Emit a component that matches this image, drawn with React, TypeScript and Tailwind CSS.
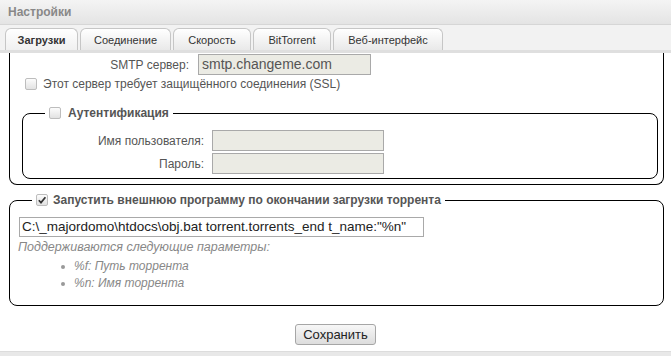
import React from "react";

const tabs = [
  { name: "Загрузки", w: "w-[73px]", active: true },
  { name: "Соединение", w: "w-[91px]" },
  { name: "Скорость", w: "w-[78px]" },
  { name: "BitTorrent", w: "w-[78px]" },
  { name: "Веб-интерфейс", w: "w-[110px]" },
];

function Check({ checked }: { checked?: boolean }) {
  return (
    <span className="flex h-[12px] w-[12px] shrink-0 items-center justify-center rounded-[2px] border border-[#bdbdbd] bg-gradient-to-b from-[#fcfcfc] to-[#e2e2e2]">
      {checked && (
        <svg width="10" height="10" viewBox="0 0 10 10">
          <path d="M1.8 5.2 L4 7.6 L8.4 2.2" fill="none" stroke="#333" strokeWidth="1.7" />
        </svg>
      )}
    </span>
  );
}

export default function App() {
  return (
    <div className="flex h-[356px] w-[671px] flex-col overflow-hidden bg-white font-['Liberation_Sans',Arial,sans-serif] text-[12px] text-[#555]">
      {/* title */}
      <div className="flex h-[25px] shrink-0 items-center border-b border-[#d6d6d6] bg-gradient-to-b from-[#f4f4f4] to-[#e4e4e4] px-[8px] font-bold text-[#888]">
        Настройки
      </div>

      {/* tabs */}
      <div className="flex h-[28px] shrink-0 items-end gap-[2px] border-b-[3px] border-[#dfdfdf] bg-[#f2f2f2] pl-[5px]">
        {tabs.map((t) => (
          <div
            key={t.name}
            className={`flex h-[22px] ${t.w} items-center justify-center rounded-t-[6px] border border-b-0 border-[#c6c6c6] bg-gradient-to-b pt-[2px] text-[11px] text-[#333] ${
              t.active ? "from-white to-[#f0f0f0] font-bold" : "from-white to-[#e9e9e9]"
            }`}
          >
            {t.name}
          </div>
        ))}
      </div>

      {/* content */}
      <div className="flex flex-1 flex-col">
        {/* SMTP block (top scrolled away) */}
        <div className="ml-[9px] w-[655px] rounded-b-[8px] border border-t-0 border-black pb-[5px]">
          <div className="mt-[1px] flex items-center gap-[9px]">
            <span className="w-[179px] text-right">SMTP сервер:</span>
            <input
              disabled
              value="smtp.changeme.com"
              className="h-[21px] w-[173px] border border-[#a9a9a9] bg-[#ebebe4] px-[3px] text-[14px] text-[#555]"
            />
          </div>
          <div className="mt-[2px] flex h-[14px] items-center gap-[6px] pl-[15px]">
            <Check />
            <span>Этот сервер требует защищённого соединения (SSL)</span>
          </div>

          <fieldset className="ml-[12px] mt-[15px] w-[636px] rounded-[8px] border border-black pb-[4px]">
            <legend className="ml-[22px] flex items-center gap-[7px] px-[4px] font-bold leading-[14px]">
              <Check />
              <span>Аутентификация</span>
            </legend>
            <div className="mt-[10px] flex flex-col gap-[2px]">
              <div className="flex items-center gap-[8px]">
                <span className="w-[181px] text-right">Имя пользователя:</span>
                <input className="h-[21px] w-[172px] border border-[#a9a9a9] bg-[#ebebe4]" disabled />
              </div>
              <div className="flex items-center gap-[8px]">
                <span className="w-[181px] text-right">Пароль:</span>
                <input className="h-[21px] w-[172px] border border-[#a9a9a9] bg-[#ebebe4]" disabled />
              </div>
            </div>
          </fieldset>
        </div>

        {/* external program */}
        <fieldset className="ml-[9px] mt-[8px] w-[655px] rounded-[8px] border border-black pb-[13px]">
          <legend className="ml-[22px] flex items-center gap-[5px] px-[4px] font-bold leading-[14px]">
            <Check checked />
            <span>Запустить внешнюю программу по окончании загрузки торрента</span>
          </legend>
          <input
            value={'C:\\_majordomo\\htdocs\\obj.bat torrent.torrents_end t_name:"%n"'}
            readOnly
            className="ml-[9px] mt-[10px] h-[20px] w-[405px] border border-[#a9a9a9] bg-white px-[2px] text-[13.5px] text-[#222]"
          />
          <div className="mt-[2px] pl-[8px] text-[12.5px] italic leading-[16px] text-[#888]">
            Поддерживаются следующие параметры:
          </div>
          <div className="mt-[3px] flex flex-col text-[12px] italic leading-[17px] text-[#888]">
            {["%f: Путь торрента", "%n: Имя торрента"].map((s) => (
              <div key={s} className="flex items-center pl-[51px]">
                <span className="mr-[9px] h-[4px] w-[4px] rounded-full bg-[#999]" />
                <span>{s}</span>
              </div>
            ))}
          </div>
        </fieldset>

        <div className="mt-[18px] flex justify-center">
          <button className="h-[21px] w-[81px] rounded-[3px] border border-[#a6a6a6] bg-gradient-to-b from-[#f7f7f7] to-[#dddddd] text-[13px] text-[#222]">
            Сохранить
          </button>
        </div>
      </div>

      {/* footer */}
      <div className="h-[5px] shrink-0 border-t border-[#dcdcdc] bg-[#e8e8e8]" />
    </div>
  );
}
